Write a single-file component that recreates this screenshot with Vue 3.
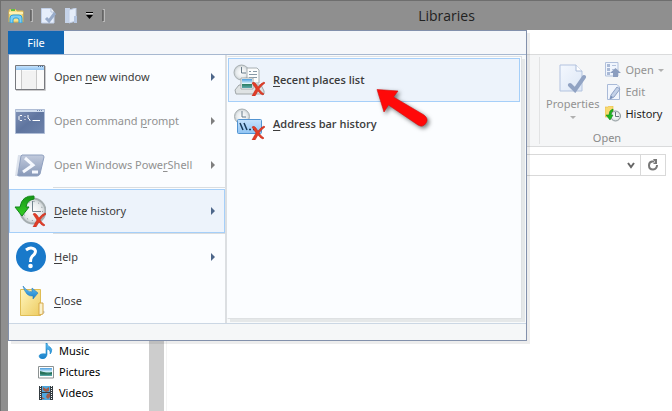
<script setup>
const places = [
  { name: 'Music', icon: 'music' },
  { name: 'Pictures', icon: 'pictures' },
  { name: 'Videos', icon: 'videos' },
]

const menu = [
  { id: 'window', before: 'Open ', key: 'n', after: 'ew window', arrow: true },
  { id: 'cmd', before: 'Open command ', key: 'p', after: 'rompt', arrow: true, disabled: true },
  { id: 'shell', before: 'Open Windows Powe', key: 'r', after: 'Shell', arrow: true, disabled: true, line: true },
  { id: 'delete', before: '', key: 'D', after: 'elete history', arrow: true, active: true, line: true },
  { id: 'help', before: '', key: 'H', after: 'elp', arrow: true },
  { id: 'close', before: '', key: 'C', after: 'lose' },
]
</script>

<template>
  <div class="window">
    <svg class="defs" aria-hidden="true">
      <defs>
        <linearGradient id="gBar" x1="0" y1="0" x2="0" y2="1"><stop offset="0" stop-color="#c5e2fc" /><stop offset="1" stop-color="#8fc4f4" /></linearGradient>
        <linearGradient id="gCmd" x1="0" y1="0" x2="1" y2="1"><stop offset="0" stop-color="#8193b8" /><stop offset=".5" stop-color="#5f759f" /><stop offset="1" stop-color="#6d82aa" /></linearGradient>
        <linearGradient id="gPs" x1="0" y1="0" x2="0" y2="1"><stop offset="0" stop-color="#c2cbdd" /><stop offset="1" stop-color="#8798b8" /></linearGradient>
        <linearGradient id="gGreen" x1="0" y1="0" x2="0" y2="1"><stop offset="0" stop-color="#159615" /><stop offset="1" stop-color="#37cf26" /></linearGradient>
        <linearGradient id="gFolder" x1="0" y1="0" x2="1" y2="1"><stop offset="0" stop-color="#fff6bd" /><stop offset="1" stop-color="#edcb61" /></linearGradient>
        <linearGradient id="gBlue" x1="0" y1="0" x2="0" y2="1"><stop offset="0" stop-color="#65c1f4" /><stop offset="1" stop-color="#177fc9" /></linearGradient>
        <linearGradient id="gPaper" x1="0" y1="0" x2="1" y2="1"><stop offset="0" stop-color="#f4f8fe" /><stop offset="1" stop-color="#dde7f6" /></linearGradient>
        <linearGradient id="gPhoto" x1="0" y1="0" x2="0" y2="1"><stop offset="0" stop-color="#4b9ee0" /><stop offset=".5" stop-color="#e0f5fb" /><stop offset=".6" stop-color="#2e8065" /><stop offset="1" stop-color="#5aa9ad" /></linearGradient>
        <radialGradient id="gClock"><stop offset="0" stop-color="#fff" /><stop offset=".7" stop-color="#e6eaec" /><stop offset="1" stop-color="#c1c8cb" /></radialGradient>
        <symbol id="cross" viewBox="0 0 14 15">
          <path d="M1 2Q3 0 5 3L7 6Q10 2 13 1L14 2Q11 4 8 8Q10 11 13 13L12 14Q9 13 7 10L4 15H1Q3 11 5 8Q3 5 1 2Z" fill="#e23d27" stroke="#bd2415" stroke-width=".5" />
        </symbol>
      </defs>
    </svg>

    <header class="titlebar">
      <svg width="16" height="14" viewBox="0 0 16 14">
        <path d="M1 13V2Q1 0 3 0H7L9 2H15V13Z" fill="#f8e28c" stroke="#dcb64c" />
        <path d="M3 1H7" stroke="#63b946" stroke-width="2" /><path d="M1 4H15" stroke="#fff1b2" stroke-width="2" />
        <path d="M2 14V9Q2 6 5 6H11Q14 6 14 9V14H11V11Q11 9 9 9H7Q5 9 5 11V14Z" fill="#7dd0f6" stroke="#2f9fdb" />
      </svg>
      <i class="grip"></i>
      <div class="quick">
        <button aria-label="Properties">
          <svg width="15" height="16" viewBox="0 0 15 16">
            <path d="M.5.5H10L13 4V15H.5Z" fill="#e6eefb" stroke="#c2d0e8" /><path d="M10 .5V4H13" fill="#fff" stroke="#b4c3dd" />
            <path d="M5 10L8 13L14 5" fill="none" stroke="#98abc9" stroke-width="3" />
          </svg>
        </button>
        <button aria-label="New folder">
          <svg width="14" height="16" viewBox="0 0 14 16">
            <path d="M1 0H6V15H1Z" fill="#c5d3e9" /><path d="M5 2L12 0V13L5 15Z" fill="#e5edf9" stroke="#c0cee5" />
            <path d="M10 8H13V15H10Z" fill="#b4c5e0" />
          </svg>
        </button>
        <button aria-label="Customize toolbar">
          <svg width="8" height="7" viewBox="0 0 8 7">
            <path d="M0 .5H7" stroke="#000" /><path d="M0 1.500H7" stroke="#d5d5d5" /><path d="M0 3H7L3.500 7Z" fill="#000" />
          </svg>
        </button>
      </div>
      <i class="grip"></i>
      <h1>Libraries</h1>
    </header>

    <div class="client">
      <div class="tabs"></div>
      <div class="ribbon">
        <section class="group">
          <div class="tools">
            <button class="properties" disabled>
              <svg width="28" height="29" viewBox="0 0 28 29">
                <path d="M1 1H17L23 7V27H1Z" fill="url(#gPaper)" stroke="#b3c3df" /><path d="M17 1V7H23" fill="#fff" stroke="#aabbd8" />
                <path d="M11 21L16 26L25 13" fill="none" stroke="#91a3c3" stroke-width="4" stroke-linecap="round" />
              </svg>
              <span>Properties</span>
              <i class="caret"></i>
            </button>
            <div class="stack">
              <button disabled>
                <svg width="16" height="16" viewBox="0 0 16 16">
                  <path d="M.5.5H13V14H.5Z" fill="#f0f5fd" stroke="#b2c1dc" /><path d="M2 2H5V5H2ZM2 6H5V9H2ZM2 10H5V13H2Z" fill="#a9b9d6" /><path d="M7 3.500H11M7 7.500H9" stroke="#b4c3dd" />
                  <path d="M10.500 6L16 11H13V15H8V11H5Z" fill="#8c9ebf" />
                </svg>
                <span>Open</span><i class="caret"></i>
              </button>
              <button disabled>
                <svg width="16" height="16" viewBox="0 0 16 16">
                  <path d="M2.500.5H12L14.500 3V15.500H2.500Z" fill="#f2f6fd" stroke="#a9bad8" />
                  <path d="M12 3L15 5L9 13L5 15L6 11Z" fill="#c3d1e8" stroke="#8da1c4" /><path d="M5 15L6 12L8 13Z" fill="#7088b4" />
                </svg>
                <span>Edit</span>
              </button>
              <button>
                <svg width="16" height="16" viewBox="0 0 16 16">
                  <path d="M0 1H3L4 0H8V11H0Z" fill="#f8d970" stroke="#e5bb42" stroke-width=".6" />
                  <circle cx="10.500" cy="10" r="5" fill="url(#gClock)" stroke="#929c9f" /><path d="M10.500 6V10.500H14" fill="none" stroke="#66757c" />
                  <path d="M8 3Q4 4 4 9H1L5 14L8 9H6Q6 6 8 5Z" fill="#1eb522" stroke="#109017" stroke-width=".6" />
                </svg>
                <span>History</span>
              </button>
            </div>
          </div>
          <p>Open</p>
        </section>
      </div>

      <div class="location">
        <div class="address">
          <button class="recent" aria-label="Previous locations">
            <svg width="8" height="7" viewBox="0 0 8 7"><path d="M1 1L4 5L7 1" fill="none" stroke="#666" stroke-width="2" /></svg>
          </button>
          <button class="refresh" aria-label="Refresh">
            <svg width="12" height="12" viewBox="0 0 12 12">
              <path d="M7 2.500H5Q2 3 2 6.500Q2 10.500 6 10.500Q10 10 10 6" fill="none" stroke="#777" stroke-width="2" /><path d="M6 0H10V5H6L8 3Z" fill="#777" />
            </svg>
          </button>
        </div>
      </div>

      <div class="browser">
        <nav class="places">
          <a v-for="p in places" :key="p.name" href="#">
            <svg width="16" height="16" viewBox="0 0 16 16">
              <template v-if="p.icon === 'music'">
                <path d="M8 0H9Q9 3 12 4Q15 6 13 10L12 11Q13 7 9 6V12Q8 16 4 16Q1 15 1 13Q2 10 8 11Z" fill="url(#gBlue)" stroke="#1687cb" stroke-width=".6" />
              </template>
              <template v-else-if="p.icon === 'pictures'">
                <path d="M.5 2.500H15.500V14H.5Z" fill="#fff" stroke="#8c9292" /><path d="M2 4H14V12H2Z" fill="url(#gPhoto)" /><path d="M2 7Q7 8 10 10L14 8V10Q7 11 2 10Z" fill="#28725a" />
              </template>
              <template v-else>
                <path d="M1 1H15V15H1Z" fill="#343b40" /><path d="M4 1H12V7H4ZM4 8H12V15H4Z" fill="#4fa7dc" /><path d="M5 2L8 4L11 2V6L8 7L5 5ZM9 9L12 8V12L10 14L8 12ZM4 12L7 14H4Z" fill="#a25c48" />
                <path d="M2.500 1V15M13.500 1V15" stroke="#f2f8f8" stroke-dasharray="1 1" />
              </template>
            </svg>
            {{ p.name }}
          </a>
        </nav>
        <div class="scrollbar"></div>
        <main></main>
      </div>
    </div>

    <div class="popup">
      <div class="popup-head"><button class="file">File</button></div>
      <div class="popup-body">
        <ul class="menu">
          <li v-for="m in menu" :key="m.id" :class="{ line: m.line }">
            <button :class="{ active: m.active }" :disabled="m.disabled">
              <svg width="32" height="32" viewBox="0 0 32 32">
                <template v-if="m.id === 'window'">
                  <path d="M2 29.500H31.500V5" fill="none" stroke="#cbcbcd" />
                  <path d="M1.500 4.500H30.500V28.500H1.500Z" fill="#fafafa" stroke="#77797e" /><path d="M2 5H30V9H2Z" fill="url(#gBar)" />
                  <path d="M8 10H22V28H8Z" fill="#f2f2f2" /><path d="M7.500 9V28M22.500 9V28" stroke="#c8c8c8" /><path d="M24 5.500H29" stroke="#456d9c" stroke-dasharray="1 1" />
                </template>
                <template v-else-if="m.id === 'cmd'">
                  <path d="M1.500 4.500H30.500V28.500H1.500Z" fill="url(#gCmd)" stroke="#afbdd6" /><path d="M2 5H30V7H2Z" fill="#cfdced" /><path d="M23 5.500H29" stroke="#7186ab" stroke-dasharray="1 1" />
                  <path d="M8 10.500H6L5 11.500V14.500L6 15.500H8M11 11V12M11 14V15M14 10V13L16 15V16M18.500 15.500H26" fill="none" stroke="#fff" />
                </template>
                <template v-else-if="m.id === 'shell'">
                  <path d="M4 6H9L5 27H1Z" fill="#dce2ec" /><path d="M8 6H28Q30 6 30 8L26 25Q25 27 23 27H5Q3 27 4 25L7 7Z" fill="url(#gPs)" stroke="#8fa0bf" />
                  <path d="M11 9L19 16L9 23M18 23H24" fill="none" stroke="#f5f8fe" stroke-width="3" />
                </template>
                <template v-else-if="m.id === 'delete'">
                  <circle cx="19" cy="16" r="12.500" fill="url(#gClock)" stroke="#a5adb0" stroke-width="2" /><circle cx="19" cy="16" r="9.500" fill="none" stroke="#7c878e" stroke-dasharray="1 4" />
                  <path d="M18.500 6V16.500H27" fill="none" stroke="#71838e" />
                  <path d="M20 1Q8 0 6 12H1L8 21L15 12H12Q13 5 20 4Z" fill="url(#gGreen)" stroke="#12861a" /><use href="#cross" x="18" y="17" width="14" height="15" />
                </template>
                <template v-else-if="m.id === 'help'">
                  <circle cx="17" cy="16" r="15" fill="#1979ca" />
                  <path d="M12 9Q16 6 19 7.500Q23 9 20.500 13L18 15.500Q16.500 17 16.500 21" fill="none" stroke="#fff" stroke-width="3" /><circle cx="16.500" cy="25" r="2.300" fill="#fff" />
                </template>
                <template v-else>
                  <path d="M26 23L31 27L29 29H25Z" fill="#c5c8ca" /><path d="M6.500 4.500H26.500V30.500H6.500Z" fill="url(#gFolder)" stroke="#dfbd55" /><path d="M25 18H29V29L25 30Z" fill="#faf1cb" stroke="#d7a849" />
                  <path d="M9 1Q13 7 18 7V3L24 8L19 14V11Q12 12 9 1Z" fill="url(#gBlue)" stroke="#2a7ebd" stroke-width=".6" />
                </template>
              </svg>
              <span class="label">{{ m.before }}<u>{{ m.key }}</u>{{ m.after }}</span>
              <svg v-if="m.arrow" class="more" width="4" height="8" viewBox="0 0 4 8"><path d="M0 0L4 4L0 8Z" fill="currentColor" /></svg>
            </button>
          </li>
        </ul>
        <div class="side">
          <ul class="submenu">
            <li>
              <button class="active">
                <svg width="32" height="32" viewBox="0 0 32 32">
                  <circle cx="8.500" cy="8.500" r="7.500" fill="url(#gClock)" stroke="#a9b0b2" /><path d="M8.500 3V9H13" fill="none" stroke="#677a88" />
                  <path d="M14 4H24L26 6V19H14Z" fill="#fcfdfd" stroke="#a7afb2" /><path d="M16 7.500H18M20 7.500H24M16 10.500H24M16 13.500H24" stroke="#8799a7" />
                  <path d="M2 26L6 21H28L31 27V30H3Z" fill="#dfe3e4" stroke="#a0a6a8" /><path d="M8 14H20V25H8Z" fill="#fff" stroke="#a5adae" /><path d="M9 15H19V24H9Z" fill="url(#gPhoto)" />
                  <use href="#cross" x="18" y="17" width="14" height="15" />
                </svg>
                <span class="label"><u>R</u>ecent places list</span>
              </button>
            </li>
            <li>
              <button>
                <svg width="32" height="32" viewBox="0 0 32 32">
                  <circle cx="9" cy="8.500" r="7.500" fill="url(#gClock)" stroke="#a9b0b2" /><path d="M9 3V9H13" fill="none" stroke="#677a88" />
                  <rect x="4.500" y="11.500" width="24" height="14" rx="1" fill="url(#gBar)" stroke="#5294d2" />
                  <path d="M7 15L10 22M11 15L14 22M16 21.500H18M20 21.500H22" stroke="#173958" stroke-width="1.500" /><use href="#cross" x="18" y="17" width="14" height="15" />
                </svg>
                <span class="label"><u>A</u>ddress bar history</span>
              </button>
            </li>
          </ul>
        </div>
      </div>
      <div class="popup-foot"></div>
    </div>

    <svg class="pointer" width="64" height="52" viewBox="0 0 64 52" aria-hidden="true">
      <path d="M5 4.500L26 6L21.500 12L52 30Q57 34 54 38Q51 43 46 40L16.500 20L12 27Z" fill="#ff0909" stroke="#d01010" stroke-width=".6" />
    </svg>
  </div>
</template>

<style>
body {
  margin: 0;
}
</style>

<style scoped>
* {
  box-sizing: border-box;
}
.window {
  position: relative;
  display: flex;
  flex-direction: column;
  min-height: 100vh;
  padding-left: 7px;
  border-left: 1px solid #6e6e6e;
  border-top: 1px solid #6e6e6e;
  background: #8f8f8f;
  color: #3c3c3c;
  font: 11px/16px "Noto Sans", "Open Sans", sans-serif;
  overflow: hidden;
}
svg {
  display: block;
  flex: none;
}
.defs {
  position: absolute;
  width: 0;
  height: 0;
}
button {
  display: flex;
  align-items: center;
  padding: 0;
  border: 0;
  background: none;
  color: inherit;
  font: inherit;
}
ul {
  margin: 0;
  padding: 0;
  list-style: none;
}
.titlebar {
  display: flex;
  align-items: center;
  height: 29px;
}
.quick {
  display: flex;
  align-items: center;
  gap: 8px;
  margin: 0 8px;
}
.grip {
  width: 3px;
  height: 13px;
  margin-left: 6px;
  border: 1px solid #b9b9b9;
  border-left-color: #666;
  background: #777;
}
.quick + .grip {
  margin-left: 0;
}
.titlebar h1 {
  flex: 1;
  margin: 0;
  padding-left: 116px;
  text-align: center;
  color: #222;
  font-family: "Open Sans", "Noto Sans", sans-serif;
  font-size: 14px;
  font-weight: 400;
  line-height: 20px;
}
.client {
  display: flex;
  flex: 1;
  flex-direction: column;
  background: #fff;
}
.tabs {
  height: 24px;
}
.ribbon {
  display: flex;
  justify-content: flex-end;
  height: 93px;
  padding: 2px 0;
  border-top: 1px solid #dadbdc;
  border-bottom: 1px solid #dadbdc;
  background: #f5f6f7;
}
.group {
  width: 133px;
  padding-left: 6px;
  border-left: 1px solid #e2e3e4;
}
.tools {
  display: flex;
  gap: 6px;
  height: 71px;
  padding-top: 2px;
}
.properties {
  flex-direction: column;
  align-self: flex-start;
  padding-top: 5px;
}
.properties span {
  margin-top: 3px;
}
.properties .caret {
  margin-top: 4px;
}
.stack button {
  gap: 4px;
  height: 22px;
}
.stack button:last-child {
  color: #1e1e1e;
}
.tools button:disabled {
  color: #929292;
}
.caret {
  border: 3px solid transparent;
  border-top-color: #b0b0b0;
  border-bottom: 0;
}
.group p {
  margin: 0;
  padding-right: 4px;
  text-align: center;
  color: #8a8a8a;
  line-height: 20px;
}
.location {
  padding: 7px 6px;
}
.address {
  display: flex;
  justify-content: flex-end;
  height: 22px;
  border: 1px solid #d9d9d9;
}
.recent {
  padding: 0 5px;
}
.refresh {
  width: 25px;
  justify-content: center;
  border-left: 1px solid #d9d9d9;
}
.browser {
  display: flex;
  flex: 1;
}
.places {
  display: flex;
  flex: none;
  flex-direction: column;
  justify-content: flex-end;
  width: 141px;
  padding: 0 0 8px 30px;
}
.places a {
  display: flex;
  align-items: center;
  gap: 5px;
  height: 21px;
  color: #000;
  text-decoration: none;
}
.scrollbar {
  width: 15px;
  background: #cdcdcd;
}
.browser main {
  flex: 1;
  margin-left: 2px;
  border-left: 1px solid #f3f3f3;
}
.popup {
  position: absolute;
  top: 29px;
  left: 7px;
  width: 519px;
  border: 1px solid #8391ac;
  background: #fbfdff;
  box-shadow: 3px 3px 0 #00000012;
}
.popup-head {
  display: flex;
  height: 24px;
  border-bottom: 1px solid #a7b8d0;
  background: #f5f7fa;
}
.file {
  justify-content: center;
  width: 56px;
  height: 23px;
  margin-left: -1px;
  background: #1267b3;
  color: #fff;
}
.popup-body {
  display: grid;
  grid-template-columns: 216px 1fr;
}
.menu button {
  width: 100%;
  height: 44px;
  padding: 0 9px 0 4px;
  border: 1px solid transparent;
}
.menu .line::after {
  content: "";
  display: block;
  height: 1px;
  margin-left: 44px;
  border-top: 1px solid #dadddf;
}
.label {
  flex: 1;
  margin-left: 8px;
  text-align: left;
  white-space: nowrap;
}
u {
  text-underline-offset: 2px;
}
.more {
  color: #4e678a;
}
.menu button:disabled {
  color: #919191;
}
.menu button:disabled .more {
  color: #7f7f7f;
}
.menu button.active,
.submenu button.active {
  border-color: #a5cff9;
  background: #edf3fb;
}
.side {
  display: flex;
  padding: 1px 4px 4px 0;
  border-left: 2px solid #dcdfe2;
  background: #f8fafb;
}
.submenu {
  flex: 1;
  border: 1px solid #dee1e3;
  border-left-color: #fbfdff;
  background: #fbfdff;
  box-shadow: 3px 3px 0 #e5e8e9;
}
.submenu li {
  padding: 1px 1px 0 0;
}
.submenu li + li {
  padding-top: 0;
}
.submenu button {
  width: 100%;
  height: 44px;
  padding-left: 4px;
  border: 1px solid transparent;
  font-family: "Open Sans", "Noto Sans", sans-serif;
  font-weight: 600;
}
.popup-foot {
  height: 17px;
  border-top: 1px solid #cbd7e4;
  background: #f5f7f8;
}
.pointer {
  position: absolute;
  top: 84px;
  left: 371px;
  filter: drop-shadow(2px 2px 2px #0008);
}
</style>
